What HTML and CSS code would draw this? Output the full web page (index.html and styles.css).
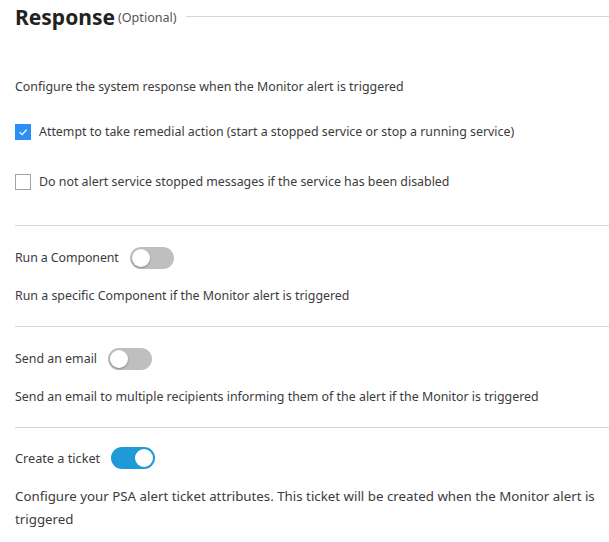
FILE: index.html
```html
<!DOCTYPE html>
<html>
<head>
<meta charset="utf-8">
<link rel="stylesheet" href="styles.css">
</head>
<body>
<div class="page">
  <div class="title-row">
    <h2 class="title">Response</h2>
    <span class="optional">(Optional)</span>
    <span class="title-line"></span>
  </div>
  <p class="intro">Configure the system response when the Monitor alert is triggered</p>
  <label class="check-row">
    <span class="box checked"><svg viewBox="0 0 16 16" width="16" height="16"><path d="M4 8.2 L7 11 L12.2 5.2" fill="none" stroke="#fff" stroke-width="1.4"/></svg></span>
    <span>Attempt to take remedial action (start a stopped service or stop a running service)</span>
  </label>
  <label class="check-row second">
    <span class="box"></span>
    <span>Do not alert service stopped messages if the service has been disabled</span>
  </label>
  <section class="block">
    <div class="toggle-row"><span class="label tight">Run a Component</span><span class="toggle"><span class="knob"></span></span></div>
    <p class="desc">Run a specific Component if the Monitor alert is triggered</p>
  </section>
  <section class="block">
    <div class="toggle-row"><span class="label">Send an email</span><span class="toggle"><span class="knob"></span></span></div>
    <p class="desc">Send an email to multiple recipients informing them of the alert if the Monitor is triggered</p>
  </section>
  <section class="block large">
    <div class="toggle-row"><span class="label">Create a ticket</span><span class="toggle on"><span class="knob"></span></span></div>
    <p class="desc">Configure your PSA alert ticket attributes. This ticket will be created when the Monitor alert is triggered</p>
  </section>
</div>
</body>
</html>
```
FILE: styles.css
```css
html, body {
  margin: 0;
  padding: 0;
  background: #fff;
}
body {
  font-family: "Noto Sans", "Liberation Sans", sans-serif;
  font-size: 12.4px;
  color: #3b3b3b;
}
.page {
  padding-left: 15px;
}
.title-row {
  display: flex;
  align-items: baseline;
  height: 34px;
}
.title {
  margin: 0;
  font-size: 21px;
  font-weight: 700;
  color: #222;
  line-height: 34px;
}
.optional {
  font-size: 12.6px;
  color: #555;
  margin-left: 3px;
  position: relative;
  top: -3px;
}
.title-line {
  flex: 1;
  height: 1px;
  background: #d3d7da;
  margin-left: 9px;
  align-self: flex-start;
  margin-top: 16px;
}
.intro {
  margin: 44px 0 0;
  line-height: 18px;
}
.check-row {
  display: flex;
  align-items: center;
  gap: 8px;
  margin-top: 27px;
  line-height: 18px;
}
.check-row.second {
  margin-top: 32px;
}
.box {
  width: 14px;
  height: 14px;
  border: 1px solid #9aa5ad;
  background: #fff;
  display: flex;
  align-items: center;
  justify-content: center;
  flex: none;
}
.box.checked {
  background: #2b8ff5;
  border-color: #2b8ff5;
}
.block {
  border-top: 1px solid #d3d7da;
  margin-top: 34px;
  padding-top: 21px;
}
.block + .block {
  margin-top: 19px;
}
.toggle-row {
  display: flex;
  align-items: center;
  gap: 11px;
  height: 22px;
  line-height: 18px;
}
.label.tight {
  letter-spacing: -0.1px;
}
.toggle {
  width: 44px;
  height: 22px;
  border-radius: 11px;
  background: #bfbfbf;
  position: relative;
  flex: none;
}
.toggle .knob {
  position: absolute;
  top: 2px;
  left: 2px;
  width: 18px;
  height: 18px;
  border-radius: 50%;
  background: #fff;
  box-shadow: 0 1px 2px rgba(0,0,0,0.3);
}
.toggle.on {
  background: #1e9ad6;
}
.toggle.on .knob {
  left: 24px;
  box-shadow: none;
}
.desc {
  margin: 15px 0 0;
  line-height: 23px;
}
.large {
  padding-top: 19px;
}
.large .label {
  font-size: 12.7px;
}
.large .desc {
  font-size: 13.3px;
  margin-top: 16px;
}
```
